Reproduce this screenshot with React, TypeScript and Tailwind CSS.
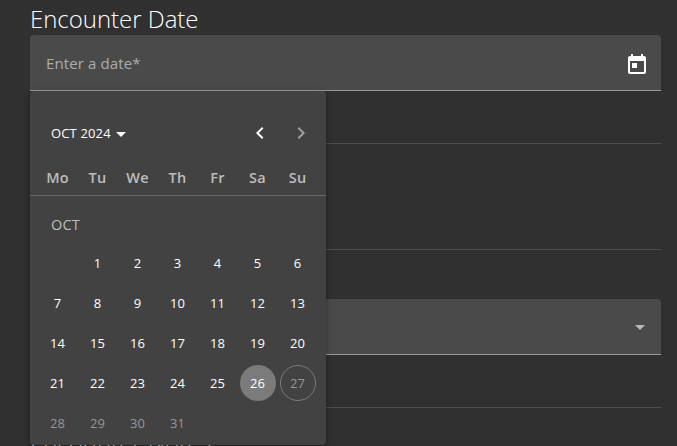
import React from "react";

const weekdays = ["Mo", "Tu", "We", "Th", "Fr", "Sa", "Su"];
const days = Array.from({ length: 31 }, (_, i) => i + 1);

function Heading({ children }: { children: React.ReactNode }) {
  return <h2 className="h-8 whitespace-nowrap text-2xl leading-8 font-light tracking-[-0.03px] text-white">{children}</h2>;
}

function Day({ day }: { day: number }) {
  let look = "text-white";
  if (day === 26) look = "bg-[#7b7b7b] text-white";
  else if (day === 27) look = "border border-[#7b7b7b] text-[#979797]";
  else if (day > 27) look = "text-[#979797]";
  return (
    <div className="flex h-10 items-center justify-center">
      <span className={`flex size-9 items-center justify-center rounded-full text-[13px] ${look}`}>
        <span className="pt-0.5 pr-px">{day}</span>
      </span>
    </div>
  );
}

function Calendar() {
  return (
    <div className="absolute top-[91px] left-[30px] h-[354px] w-[296px] overflow-hidden rounded bg-[#424242] shadow-[0_2px_4px_-1px_rgba(0,0,0,0.2),0_4px_5px_0_rgba(0,0,0,0.14),0_1px_10px_0_rgba(0,0,0,0.12)]">
      <div className="flex h-[84px] items-center justify-between pr-[5px] pl-[21px]">
        <button className="flex items-center pt-0.5 text-[13px] tracking-[0.15px] text-white">
          OCT 2024
          <svg className="ml-[5px] h-[5px] w-[10px]" viewBox="0 0 10 5"><path d="M0 0L5 5L10 0Z" fill="currentColor" /></svg>
        </button>
        <div className="flex">
          <button className="mr-px flex size-10 items-center justify-center text-white">
            <svg width="24" height="24" viewBox="0 0 24 24" fill="currentColor"><path d="M15.41 7.41L14 6l-6 6 6 6 1.41-1.41L10.83 12z" /></svg>
          </button>
          <button className="flex size-10 items-center justify-center text-[#a0a0a0]">
            <svg width="24" height="24" viewBox="0 0 24 24" fill="currentColor"><path d="M8.59 16.59L13.17 12 8.59 7.41 10 6l6 6-6 6z" /></svg>
          </button>
        </div>
      </div>
      <div className="grid h-[21px] grid-cols-7 border-b border-[#676767] px-2 text-center text-[14.5px] leading-5 font-semibold tracking-[0.2px] text-[#bdbdbd]">
        {weekdays.map((d) => <span key={d} className="-mt-[7px] pr-px">{d}</span>)}
      </div>
      <div className="grid grid-cols-7 px-2">
        <div className="col-span-7 flex h-[47px] items-end pb-2 pl-[13px] text-[14.5px] leading-5 tracking-[0.2px] text-[#bdbdbd]">OCT</div>
        <span />
        {days.map((d) => <Day key={d} day={d} />)}
      </div>
    </div>
  );
}

export default function App() {
  return (
    <main className="relative h-[446px] w-[677px] overflow-hidden bg-[#303030] font-['Open_Sans',sans-serif]">
      <div className="flex flex-col pt-[3px] pr-4 pl-[30px]">
        <Heading>Encounter Date</Heading>
        <div className="flex h-14 items-center justify-between rounded-t border-b border-[#989898] bg-[#4a4a4a] pr-3 pl-4">
          <span className="pt-0.5 text-[15px] tracking-[0.12px] text-[#acacac]">Enter a date*</span>
          <svg className="mt-[5px]" width="24" height="24" viewBox="0 0 24 24" fill="white"><path d="M19 3h-1V1h-2v2H8V1H6v2H5c-1.11 0-1.99.9-1.99 2L3 19c0 1.1.89 2 2 2h14c1.1 0 2-.9 2-2V5c0-1.1-.9-2-2-2zm0 16H5V8h14v11zM7 10h5v5H7z" /></svg>
        </div>
        <hr className="mt-[52px] border-[#4d4d4d]" />
        <hr className="mt-[105px] border-[#4d4d4d]" />
        <div className="mt-[49px] flex h-14 items-center justify-end rounded-t border-b border-[#989898] bg-[#4a4a4a] pr-4">
          <svg className="mt-[2px]" width="10" height="5" viewBox="0 0 10 5"><path d="M0 0L5 5L10 0Z" fill="#b7b7b7" /></svg>
        </div>
        <hr className="mt-[52px] border-[#4d4d4d]" />
        <div className="mt-[17px]"><Heading>Encounter Notes</Heading></div>
      </div>
      <Calendar />
    </main>
  );
}
